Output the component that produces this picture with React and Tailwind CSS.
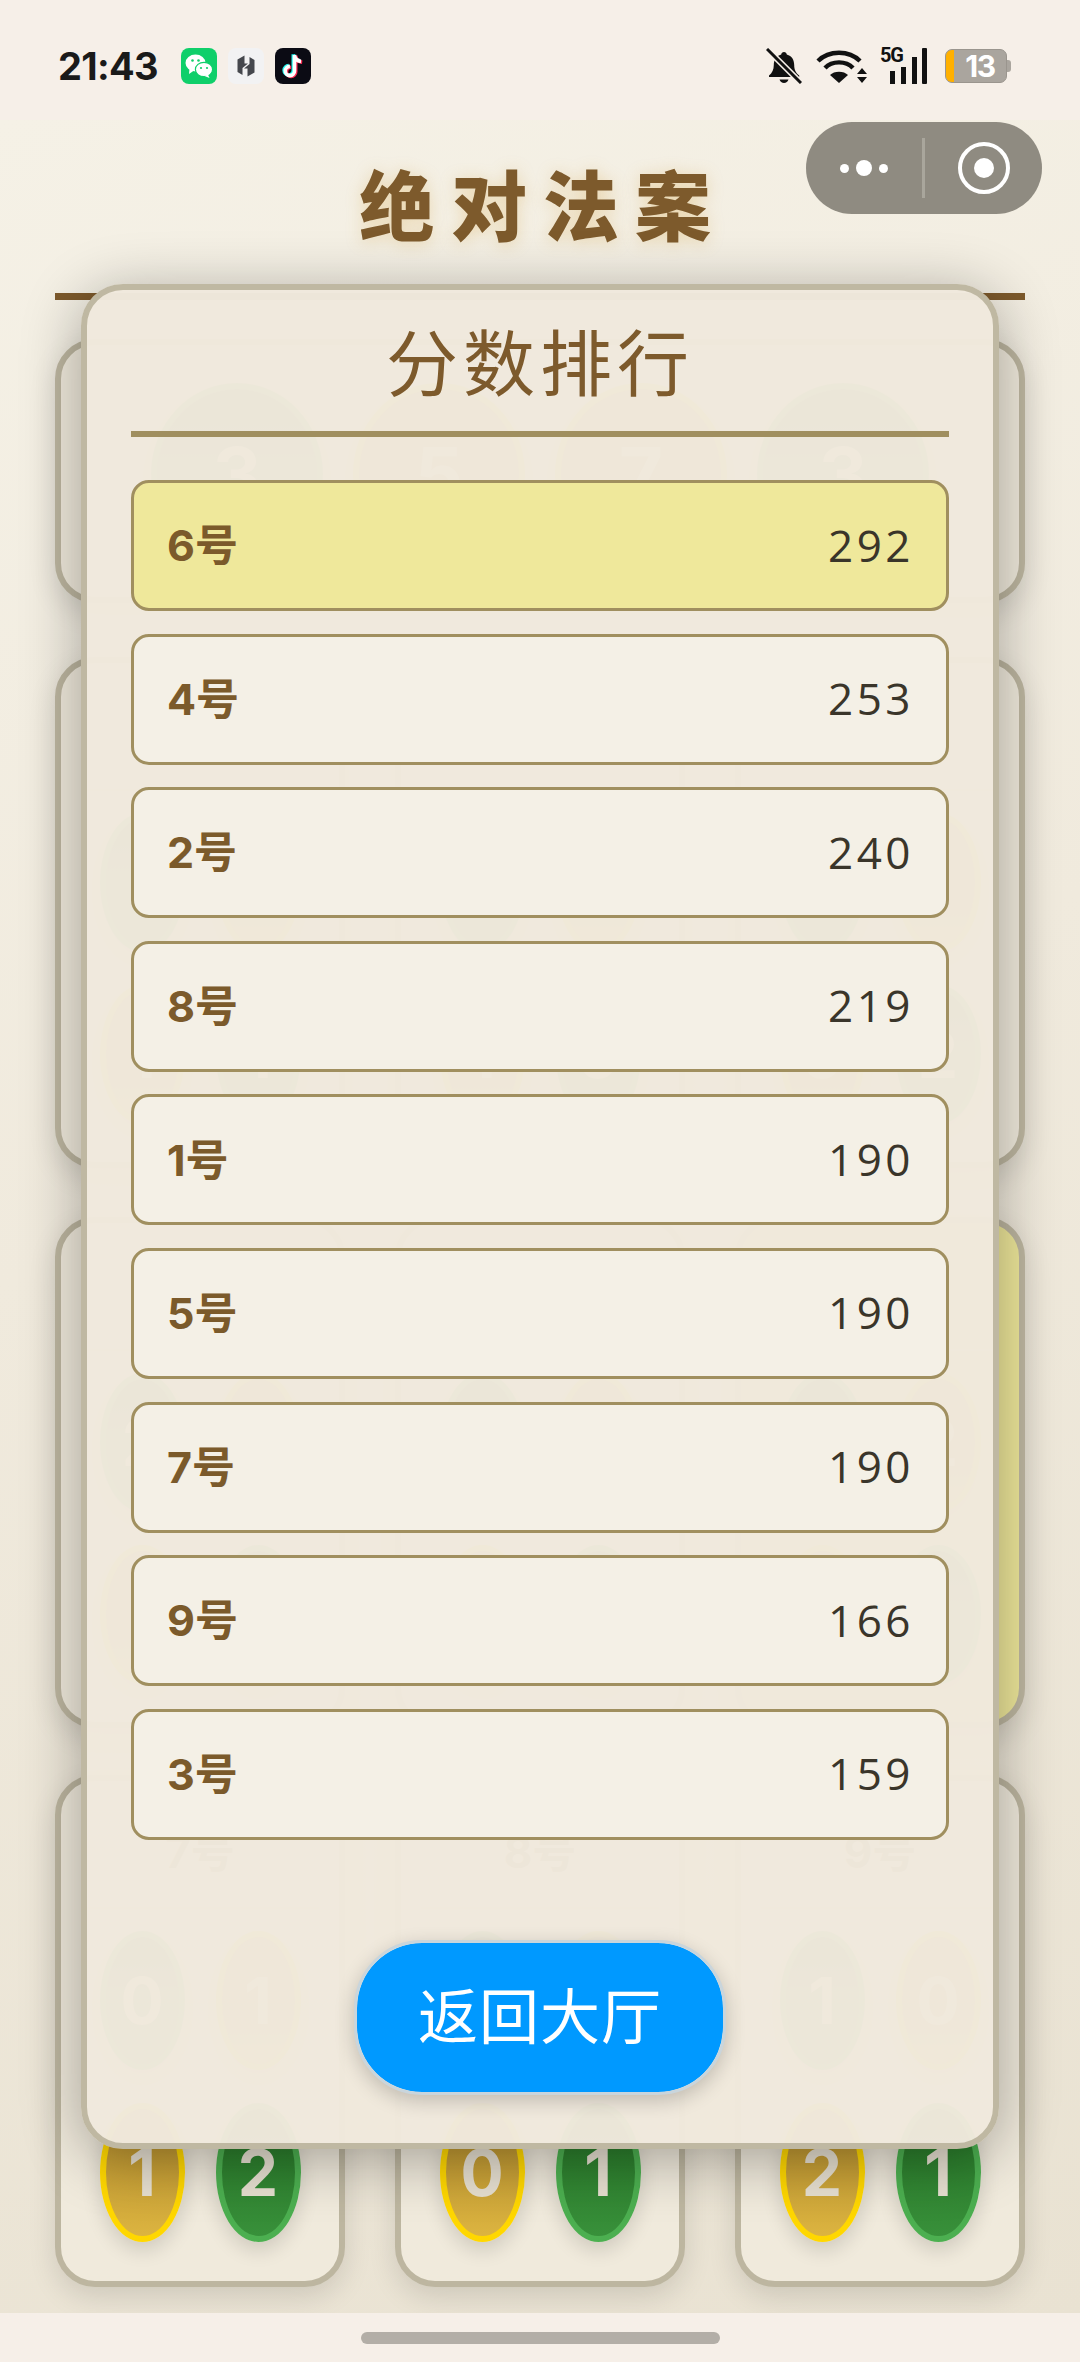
import React from "react";

const cjk = "font-['Inter','Noto_Sans_CJK_SC',sans-serif]";

function WeChat() {
  return (
    <svg width="36" height="36" viewBox="0 0 36 36">
      <rect width="36" height="36" rx="8" fill="#0fcf6a" />
      <ellipse cx="14.5" cy="15" rx="10" ry="8.5" fill="#fff" />
      <path d="M8.5 20.5 L8 26 L13 22.5Z" fill="#fff" />
      <ellipse cx="23" cy="21.5" rx="8.6" ry="7.2" fill="#fff" stroke="#0fcf6a" strokeWidth="1.2" />
      <path d="M27 26.5 L28.5 30 L23.5 28Z" fill="#fff" />
      <circle cx="11.5" cy="12.5" r="1.3" fill="#0fcf6a" />
      <circle cx="17.5" cy="12.5" r="1.3" fill="#0fcf6a" />
      <circle cx="20" cy="20" r="1.1" fill="#0fcf6a" />
      <circle cx="26" cy="20" r="1.1" fill="#0fcf6a" />
    </svg>
  );
}

function HexApp() {
  return (
    <svg width="36" height="36" viewBox="0 0 36 36">
      <rect width="36" height="36" rx="8" fill="#f2f2f3" />
      <path d="M16.5 7.5 L9.5 11.5 V24 L14.5 27 V20 L20 15.5 H16.5Z" fill="#45474d" />
      <path d="M19.5 28.5 L26.5 24.5 V12 L21.5 9 V16 L16 20.5 H19.5Z" fill="#45474d" />
    </svg>
  );
}

function TikTok() {
  const d = "M19.5 7 V23 a4.6 4.6 0 1 1 -4.6 -4.6 M19.5 7 c0.4 3.8 2.8 6 6.5 6.4";
  return (
    <svg width="36" height="36" viewBox="0 0 36 36" fill="none">
      <rect width="36" height="36" rx="8" fill="#0b0b14" />
      <path d={d} stroke="#25f4ee" strokeWidth="3.6" transform="translate(-1.2 -0.8)" />
      <path d={d} stroke="#fe2c55" strokeWidth="3.6" transform="translate(1.2 0.8)" />
      <path d={d} stroke="#fff" strokeWidth="3.6" />
    </svg>
  );
}

function Bell() {
  return (
    <svg width="36" height="36" viewBox="0 0 36 36">
      <path d="M18 4 c1.6 0 2.6 1 2.8 2.4 c5 1.4 7.4 5.4 7.4 10.6 c0 5 1.6 7.6 5 10.6 v1.4 H3 v-1.4 c3.2-2.8 4.8-5.6 4.8-10.6 c0-5.2 2.4-9.2 7.4-10.6 C15.4 5 16.4 4 18 4Z" fill="#111" />
      <path d="M13.5 31.5 h9 c-.6 2.2-2.4 3.5-4.5 3.5 s-3.900-1.300-4.500-3.500Z" fill="#111" />
      <path d="M1 1 L35 35" stroke="#f6efe8" strokeWidth="6" />
      <path d="M1 1 L35 35" stroke="#111" strokeWidth="3" />
    </svg>
  );
}

function Wifi() {
  return (
    <svg width="52" height="36" viewBox="0 0 52 36" fill="none">
      <path d="M2 13 C13 2 33 2 44 13" stroke="#111" strokeWidth="4.4" />
      <path d="M9 20 C16 12.500 30 12.500 37 20" stroke="#111" strokeWidth="4.4" />
      <path d="M23 35 L14 27 C18 22.500 28 22.500 32 27Z" fill="#111" />
      <path d="M46 20 L51 26 H41Z M41 29 H51 L46 35Z" fill="#111" />
    </svg>
  );
}

function Signal() {
  return (
    <div className="relative w-[48px] h-[37px]">
      <span className="absolute left-0 top-[-3px] font-['Roboto',sans-serif] font-bold text-[20px] leading-[20px] tracking-[-1.2px] text-[#111]">5G</span>
      <svg className="absolute left-0 top-0" width="48" height="37" viewBox="0 0 48 37">
        <rect x="10" y="23" width="5" height="13" fill="#111" />
        <rect x="21" y="19" width="5" height="17" fill="#111" />
        <rect x="32" y="9" width="5" height="27" fill="#111" />
        <rect x="42" y="0" width="5" height="36" rx="1" fill="#111" />
      </svg>
    </div>
  );
}

function Battery() {
  return (
    <div className="relative w-[66px] h-[34px] flex items-center">
      <div className="w-[62px] h-[34px] rounded-[7px] bg-[#aaa59e] overflow-hidden flex items-center border border-[#9a958e]">
        <div className="w-[8px] h-full bg-[#ffb000]" />
        <span className="flex-1 text-center font-['Inter',sans-serif] font-bold text-[30px] leading-none text-white tracking-[-1.5px]">13</span>
      </div>
      <div className="w-[4px] h-[12px] rounded-r-[3px] bg-[#aaa59e]" />
    </div>
  );
}

function Oval({ value, tone, big }) {
  const toneClass =
    tone === "yellow"
      ? "border-[#ffd700] bg-[linear-gradient(180deg,#b38c2c,#dcb440)]"
      : "border-[#4caf50] bg-[linear-gradient(180deg,#267526,#38903a)]";
  const sizeClass = big
    ? "w-[172px] h-[182px] border-[6px] text-[76px]"
    : "w-[85px] h-[139px] border-[6px] text-[64px]";
  return (
    <div className={`relative rounded-[50%] flex items-center justify-center shadow-[0_8px_20px_rgba(0,0,0,0.14)] ${toneClass} ${sizeClass}`}>
      <span className="font-['Inter',sans-serif] font-bold leading-none text-[#e6dfd0]">{value}</span>
    </div>
  );
}

function Player({ name, top, bottom, highlight, height }) {
  return (
    <div className={`${height} rounded-[40px] border-[6px] border-[#bdb6a0] shadow-[0_10px_28px_rgba(0,0,0,0.12)] flex flex-col items-stretch ${highlight ? "bg-[#eee79a]" : "bg-[#f0eadc]"}`}>
      <div className={`h-[128px] mx-[20px] pt-[15px] flex items-center justify-center border-b-2 border-[#e3dccb] text-[44px] font-bold text-[#7b5a2b] ${cjk}`}>{name}</div>
      <div className="flex-1 flex flex-col pt-[22px] gap-[33px]">
        <div className="flex justify-center gap-[31px]">
          <Oval value={top[0]} tone="green" />
          <Oval value={top[1]} tone="yellow" />
        </div>
        <div className="flex justify-center gap-[31px]">
          <Oval value={bottom[0]} tone="yellow" />
          <Oval value={bottom[1]} tone="green" />
        </div>
      </div>
    </div>
  );
}

const scores = [
  ["6号", 292],
  ["4号", 253],
  ["2号", 240],
  ["8号", 219],
  ["1号", 190],
  ["5号", 190],
  ["7号", 190],
  ["9号", 166],
  ["3号", 159],
];

export default function App() {
  return (
    <div className="relative w-[1080px] h-[2362px] overflow-hidden flex flex-col bg-[#f6efe8]">
      <header className="relative z-20 h-[120px] shrink-0 bg-[#f6efe8] flex items-center justify-between pl-[58px] pr-[69px] pt-[12px]">
        <div className="flex items-center">
          <span className="font-['Inter',sans-serif] font-bold text-[38px] leading-none tracking-[-0.7px] text-[#1a1a1a] w-[123px]">21:43</span>
          <div className="flex items-center gap-[11px]">
            <WeChat />
            <HexApp />
            <TikTok />
          </div>
        </div>
        <div className="flex items-center">
          <Bell />
          <div className="ml-[14px]"><Wifi /></div>
          <div className="ml-[12px]"><Signal /></div>
          <div className="ml-[17px]"><Battery /></div>
        </div>
      </header>

      <main className="flex-1 min-h-0 px-[55px] bg-[linear-gradient(160deg,#f5f1e6_0%,#f0eadd_45%,#e9e2d2_100%)]">
        <h1 className={`pt-[42px] pl-[6px] h-[173px] text-center text-[76px] leading-[90px] font-black tracking-[16px] text-[#7d5a2c] [text-shadow:0_2px_16px_rgba(214,170,80,0.35)] ${cjk}`}>绝对法案</h1>
        <div className="h-[7px] bg-[#7d5a2c]" />
        <div className="mt-[39px] h-[264px] rounded-[40px] border-[6px] border-[#bdb6a0] bg-[#f0eadc] shadow-[0_10px_28px_rgba(0,0,0,0.12)] flex items-center justify-center gap-[30px] pt-[6px]">
          <Oval big value="3" tone="green" />
          <Oval big value="5" tone="yellow" />
          <Oval big value="7" tone="yellow" />
          <Oval big value="3" tone="green" />
        </div>
        <div className="mt-[54px] grid grid-cols-3 gap-x-[50px]">
          <Player height="h-[511px]" name="1号" top={["1", "0"]} bottom={["1", "1"]} />
          <Player height="h-[511px]" name="2号" top={["0", "2"]} bottom={["1", "0"]} />
          <Player height="h-[511px]" name="3号" top={["1", "1"]} bottom={["0", "2"]} />
        </div>
        <div className="mt-[49px] grid grid-cols-3 gap-x-[50px]">
          <Player height="h-[511px]" name="4号" top={["2", "0"]} bottom={["1", "1"]} />
          <Player height="h-[511px]" name="5号" top={["0", "1"]} bottom={["2", "1"]} />
          <Player highlight height="h-[511px]" name="6号" top={["1", "2"]} bottom={["0", "1"]} />
        </div>
        <div className="mt-[47px] grid grid-cols-3 gap-x-[50px]">
          <Player height="h-[512px]" name="7号" top={["0", "1"]} bottom={["1", "2"]} />
          <Player height="h-[512px]" name="8号" top={["1", "1"]} bottom={["0", "1"]} />
          <Player height="h-[512px]" name="9号" top={["1", "0"]} bottom={["2", "1"]} />
        </div>
      </main>

      <footer className="relative z-20 h-[49px] shrink-0 bg-[#f6efe8] flex justify-center pt-[19px]">
        <div className="w-[359px] h-[12px] rounded-full bg-[#b3aea7]" />
      </footer>

      <div className="absolute z-30 left-[806px] top-[122px] w-[236px] h-[92px] rounded-full bg-[#8f8b81] flex items-center">
        <div className="w-[116px] flex items-center justify-center gap-[7px]">
          <span className="w-[9px] h-[9px] rounded-full bg-white" />
          <span className="w-[16px] h-[16px] rounded-full bg-white" />
          <span className="w-[9px] h-[9px] rounded-full bg-white" />
        </div>
        <div className="w-[3px] h-[60px] bg-[#a9a69c]" />
        <div className="flex-1 flex items-center justify-center">
          <div className="w-[52px] h-[52px] rounded-full border-[4px] border-white flex items-center justify-center">
            <span className="w-[20px] h-[20px] rounded-full bg-white" />
          </div>
        </div>
      </div>

      <section className="absolute z-10 left-[81px] top-[284px] w-[918px] h-[1865px] rounded-[42px] border-[6px] border-[#bfb8a2] bg-[rgba(240,233,220,0.982)] shadow-[0_10px_60px_rgba(0,0,0,0.32)] flex flex-col px-[44px]">
        <h2 className={`h-[147px] border-b-[6px] border-[#a08f5f] text-center text-[72px] leading-[104px] pt-[22px] font-normal tracking-[5px] text-[#7d5a2c] ${cjk}`}>分数排行</h2>
        <ul className="mt-[43px] flex flex-col gap-[22.6px]">
          {scores.map(([name, score], i) => (
            <li
              key={name}
              className={`h-[131px] rounded-[18px] border-[3px] border-[#a08f5f] flex items-center justify-between pl-[33px] pr-[32px] ${i === 0 ? "bg-[#efe89b]" : "bg-[#f4f0e6]"}`}
            >
              <span className={`text-[43px] font-bold text-[#7b5a2b] ${cjk}`}>{name}</span>
              <span className="font-['Open_Sans',sans-serif] text-[44px] leading-none tracking-[3.5px] pb-[2px] text-[#3a352a]">{score}</span>
            </li>
          ))}
        </ul>
        <button className={`self-center mt-[100px] w-[372px] h-[155px] rounded-[68px] border-[3px] border-[#c9d5dc] bg-[#0099ff] bg-clip-padding text-white text-[60px] font-normal tracking-[1px] shadow-[0_6px_20px_rgba(0,0,0,0.2)] ${cjk}`}>返回大厅</button>
      </section>
    </div>
  );
}
